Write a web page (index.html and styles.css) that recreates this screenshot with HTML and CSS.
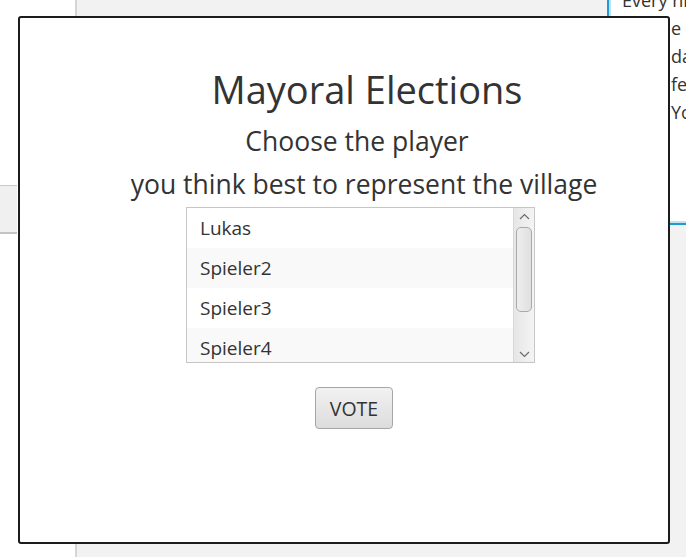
FILE: index.html
```html
<!DOCTYPE html>
<html>
<head>
<meta charset="utf-8">
<link rel="stylesheet" href="styles.css">
</head>
<body>
<div class="bg">
  <div class="left-col">
    <div class="left-band"></div>
  </div>
  <div class="main-area"></div>
  <div class="right-col">
    <div class="info-panel">
      <div class="info-line first">Every night</div>
      <div class="info-line">e</div>
      <div class="info-line">da</div>
      <div class="info-line">fe</div>
      <div class="info-line">Yo</div>
    </div>
  </div>
</div>

<div class="dialog">
  <div class="dialog-content">
    <h1 class="title">Mayoral Elections</h1>
    <p class="subtitle sub-first">Choose the player</p>
    <p class="subtitle sub-second">you think best to represent the village</p>
    <div class="listview">
      <ul class="list-items">
        <li class="row">Lukas</li>
        <li class="row odd">Spieler2</li>
        <li class="row">Spieler3</li>
        <li class="row odd">Spieler4</li>
      </ul>
      <div class="scrollbar">
        <svg class="arrow" width="11" height="7" viewBox="0 0 11 7"><path d="M1 6 L5.5 1.5 L10 6" fill="none" stroke="#6a6a6a" stroke-width="1.2"/></svg>
        <div class="track"><div class="thumb"></div></div>
        <svg class="arrow" width="11" height="7" viewBox="0 0 11 7"><path d="M1 1 L5.5 5.5 L10 1" fill="none" stroke="#6a6a6a" stroke-width="1.2"/></svg>
      </div>
    </div>
    <button class="vote-btn">VOTE</button>
  </div>
</div>
</body>
</html>
```

FILE: styles.css
```css
html, body {
  margin: 0;
  padding: 0;
}
body {
  width: 686px;
  height: 557px;
  overflow: hidden;
  font-family: "Open Sans", "Noto Sans", sans-serif;
  color: #333333;
  background: #ffffff;
}
.bg {
  display: grid;
  grid-template-columns: 77px 1fr 79px;
  height: 557px;
}
.left-col {
  background: #ffffff;
  border-right: 2px solid #d6d6d6;
  padding-top: 185px;
}
.left-band {
  width: 17px;
  height: 46px;
  background: #f0f0f0;
  border-top: 1px solid #c8c8c8;
  border-bottom: 2px solid #c4c4c4;
}
.main-area {
  background: #f2f2f2;
}
.right-col {
  background: #f2f2f2;
}
.info-panel {
  height: 239px;
  box-sizing: border-box;
  background: #ffffff;
  border-left: 2px solid #1e9bd7;
  border-bottom: 2px solid #1e9bd7;
  box-shadow: inset 1px -1px 0 1px #bfe3f4;
  padding-left: 13px;
  margin-top: -14px;
  overflow: hidden;
  font-size: 18px;
  line-height: 28px;
  white-space: nowrap;
}
.info-line {
  padding-left: 49px;
}
.info-line.first {
  padding-left: 0;
}

.dialog {
  position: absolute;
  left: 18px;
  top: 16px;
  width: 652px;
  height: 528px;
  box-sizing: border-box;
  border: 2px solid #1c1c1c;
  border-radius: 3px;
  background: #ffffff;
}
.dialog-content {
  display: flex;
  flex-direction: column;
  align-items: center;
  padding-left: 32px;
  padding-top: 46px;
}
.title {
  margin: 0 0 0 14px;
  font-size: 38px;
  font-weight: 400;
  line-height: 50px;
}
.subtitle {
  margin: 0;
  font-size: 26.5px;
  line-height: 43px;
}
.sub-first {
  margin-top: 6px;
  margin-right: 6px;
}
.sub-second {
  margin-left: 8px;
}
.listview {
  margin-top: 1px;
  margin-left: 1px;
  width: 349px;
  height: 156px;
  box-sizing: border-box;
  border: 1px solid #c6c6c6;
  display: flex;
  overflow: hidden;
}
.list-items {
  list-style: none;
  margin: 0;
  padding: 0;
  flex: 1;
}
.row {
  height: 40px;
  line-height: 40px;
  padding-left: 13px;
  font-size: 19px;
  background: #ffffff;
}
.row.odd {
  background: #f9f9f9;
}
.scrollbar {
  width: 21px;
  background: linear-gradient(to right, #e6e6e6, #f4f4f4);
  border-left: 1px solid #d8d8d8;
  display: flex;
  flex-direction: column;
  align-items: center;
  padding-top: 5px;
  box-sizing: border-box;
}
.arrow {
  display: block;
  flex: none;
}
.track {
  flex: 1;
  width: 100%;
  padding: 7px 2px 0;
  box-sizing: border-box;
}
.thumb {
  height: 85px;
  border: 1px solid #a9a9a9;
  border-radius: 5px;
  background: linear-gradient(to right, #eeeeee, #e0e0e0);
  box-sizing: border-box;
}
.scrollbar .arrow:last-child {
  margin-bottom: 4px;
}
.vote-btn {
  margin-top: 24px;
  margin-right: 12px;
  width: 78px;
  height: 42px;
  border: 1px solid #a6a6a6;
  border-radius: 4px;
  background: linear-gradient(to bottom, #f2f2f2, #dcdcdc);
  font-family: "Open Sans", "Noto Sans", sans-serif;
  font-size: 19.5px;
  color: #333333;
  padding: 0;
}
```
